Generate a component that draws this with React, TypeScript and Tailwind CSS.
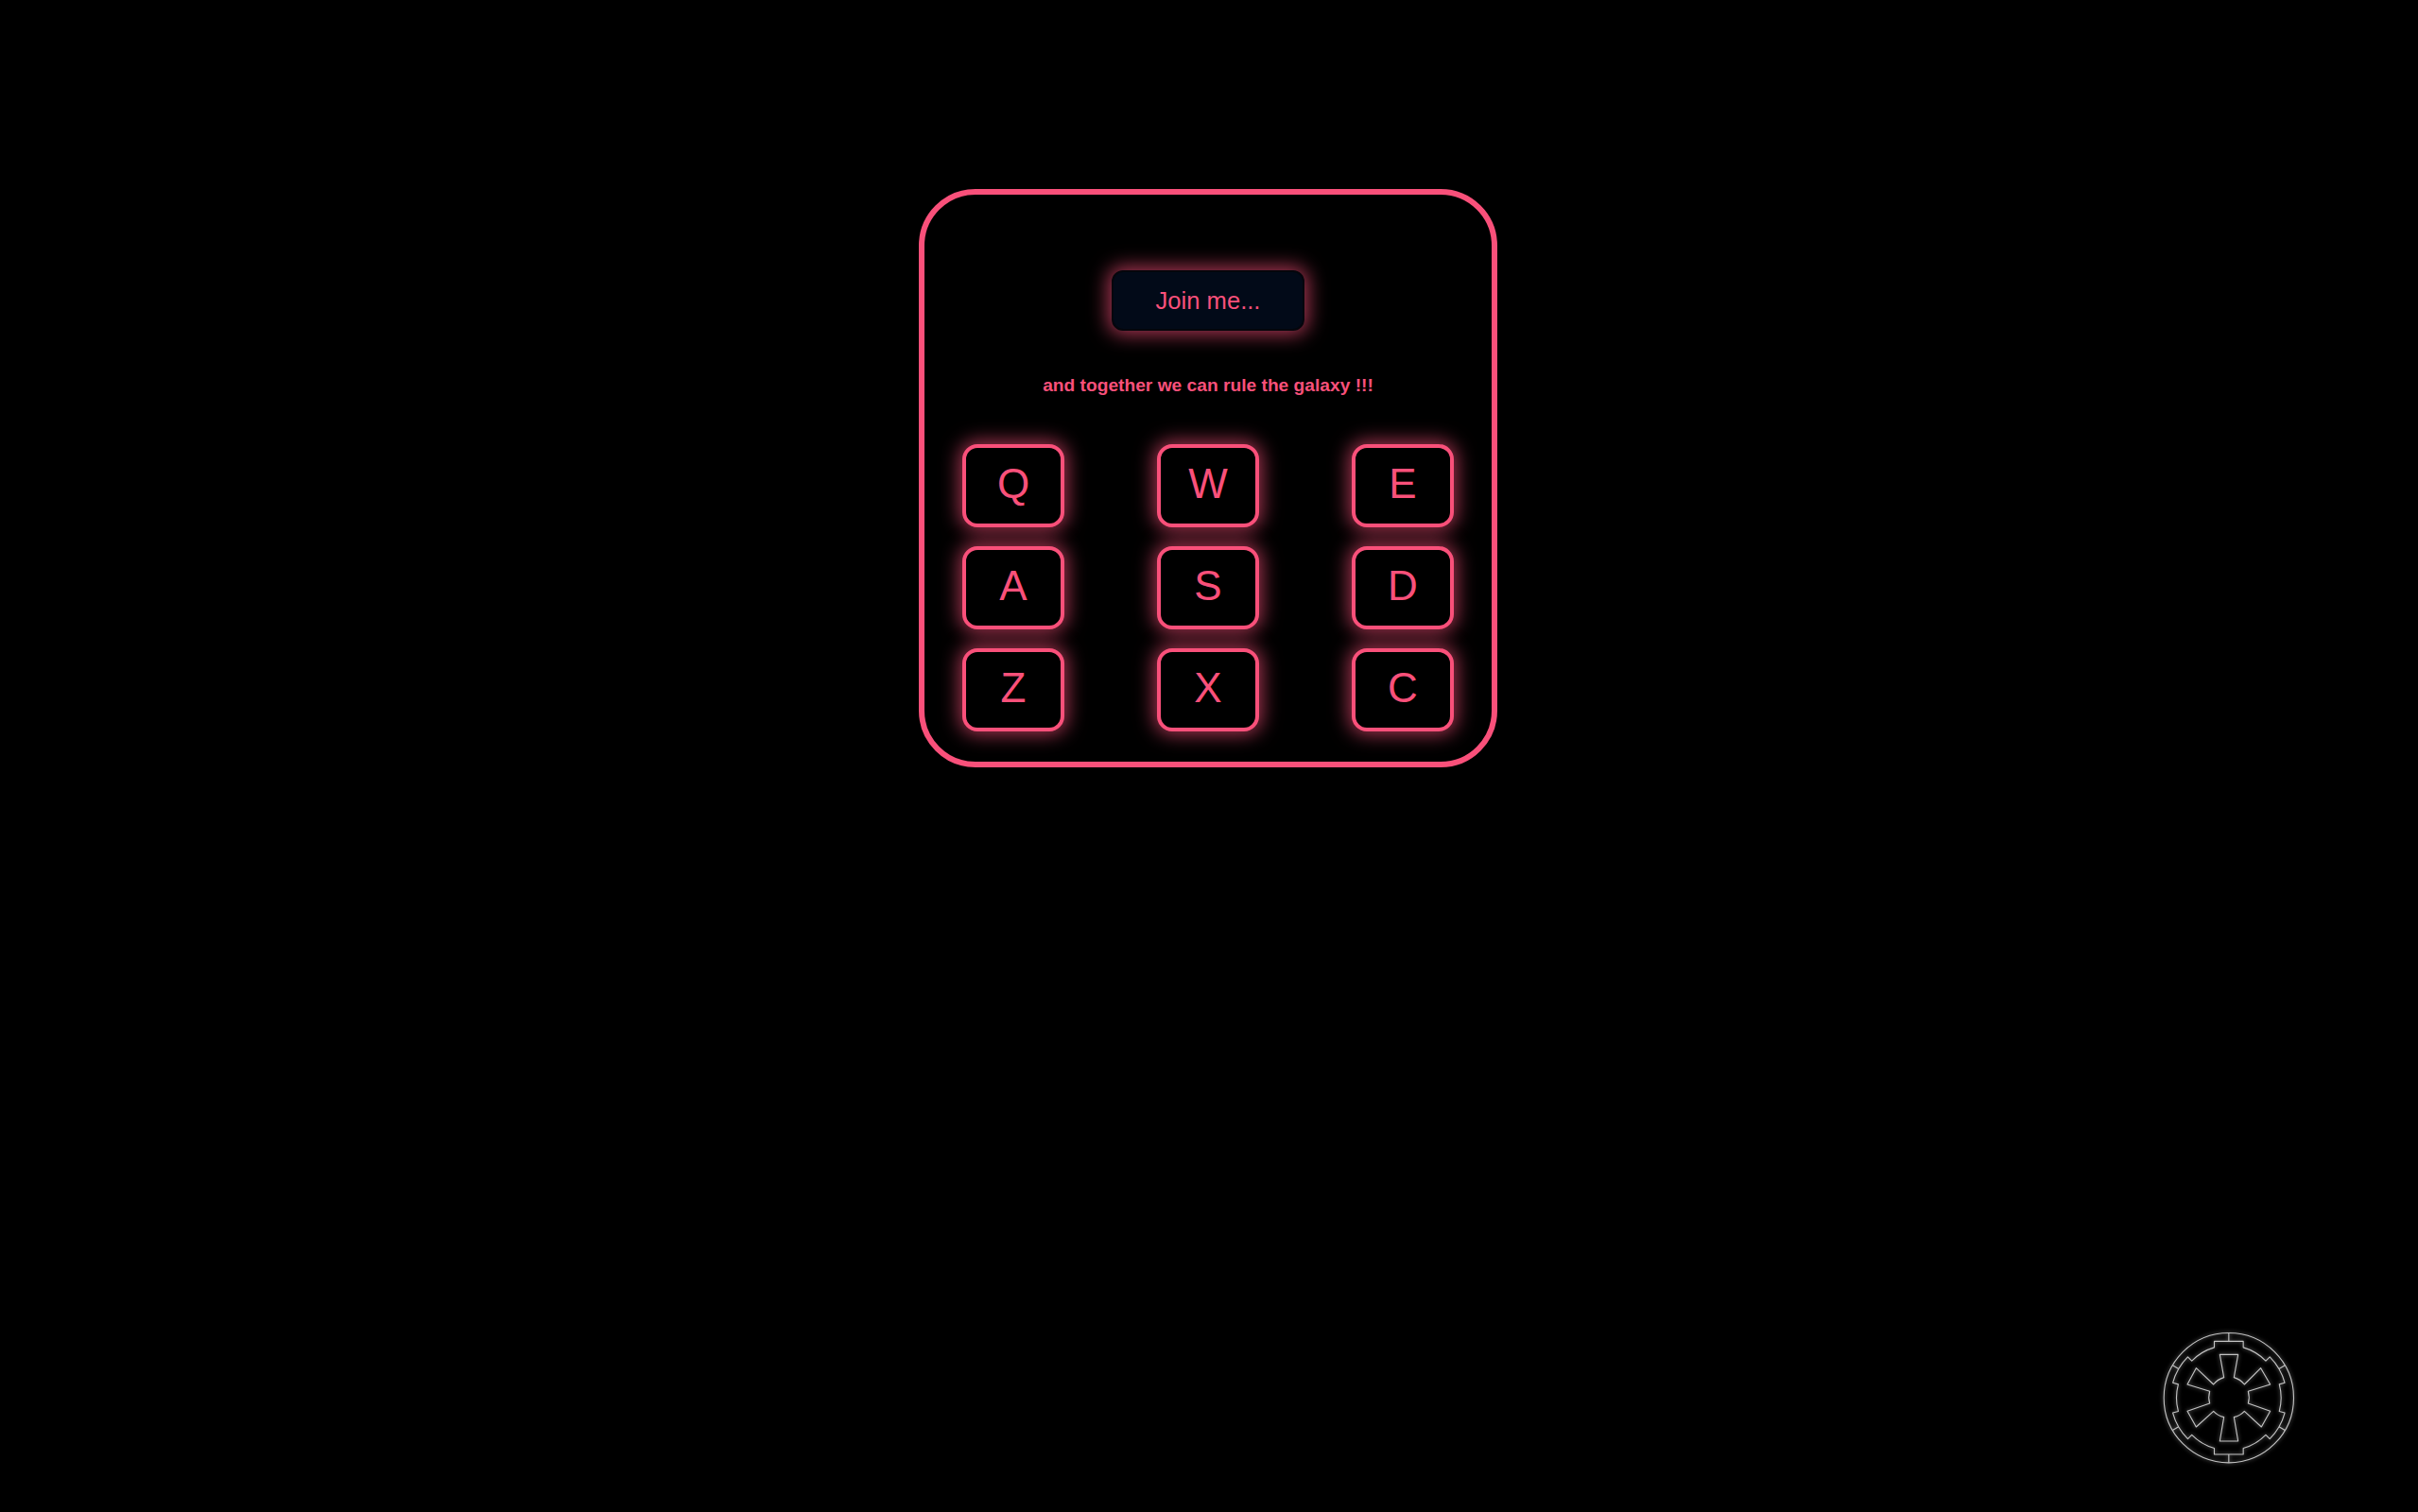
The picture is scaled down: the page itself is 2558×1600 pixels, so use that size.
const KEYS = ["Q", "W", "E", "A", "S", "D", "Z", "X", "C"];

const CX = 263.5;
const CY = 252.5;

function pt(deg: number, r: number) {
  const a = ((deg - 90) * Math.PI) / 180;
  return `${(CX + r * Math.cos(a)).toFixed(1)} ${(CY + r * Math.sin(a)).toFixed(1)}`;
}

function ringPath() {
  const rIn = 166;
  const rOut = 184;
  let d = "M 217.5 92.5 L 217.5 73 L 309.5 73 L 309.5 92.5 ";
  d += `A ${rIn} ${rIn} 0 0 1 ${pt(45, rIn)} `;
  d += `L ${pt(45, rOut)} A ${rOut} ${rOut} 0 0 1 ${pt(75, rOut)} L ${pt(75, rIn)} A ${rIn} ${rIn} 0 0 1 ${pt(105, rIn)} `;
  d += `L ${pt(105, rOut)} A ${rOut} ${rOut} 0 0 1 ${pt(135, rOut)} L ${pt(135, rIn)} `;
  d += `A ${rIn} ${rIn} 0 0 1 309.5 412.5 L 309.5 432 L 217.5 432 L 217.5 412.5 `;
  d += `A ${rIn} ${rIn} 0 0 1 ${pt(225, rIn)} `;
  d += `L ${pt(225, rOut)} A ${rOut} ${rOut} 0 0 1 ${pt(255, rOut)} L ${pt(255, rIn)} A ${rIn} ${rIn} 0 0 1 ${pt(285, rIn)} `;
  d += `L ${pt(285, rOut)} A ${rOut} ${rOut} 0 0 1 ${pt(315, rOut)} L ${pt(315, rIn)} `;
  d += `A ${rIn} ${rIn} 0 0 1 217.5 92.5 Z`;
  return d;
}

function Emblem() {
  const connectors = [0, 60, 120, 180, 240, 300];
  return (
    <svg
      viewBox="0 0 510 510"
      className="absolute right-[118px] bottom-[35px] h-[170px] w-[170px] [filter:drop-shadow(0_0_2px_rgba(255,255,255,0.55))]"
      fill="none"
      stroke="#c4c4c4"
      strokeWidth={3.4}
      strokeLinejoin="round"
    >
      <circle cx={CX} cy={CY} r={206} />
      <path d={ringPath()} />
      {connectors.map((c) => {
        const flat = c % 180 === 0;
        return <path key={c} d={`M ${pt(c, flat ? 179.5 : 184)} L ${pt(c, 206)}`} />;
      })}
      <path d="M235 115 L293 115 L280 188 A66 66 0 0 1 313 210 L365 158 L395 210 L325 232 A66 66 0 0 1 325 270 L395 295 L367 345 L313 295 A66 66 0 0 1 280 314 L293 390 L235 390 L248 314 A66 66 0 0 1 215 295 L160 345 L132 295 L203 270 A66 66 0 0 1 203 232 L132 210 L160 158 L215 210 A66 66 0 0 1 248 188 Z" />
    </svg>
  );
}

export default function App() {
  return (
    <div className="relative flex min-h-screen flex-col items-center bg-black pt-[200px] pr-[2px] font-['Liberation_Sans',Arial,sans-serif] text-[#f9507a]">
      <div className="box-border flex h-[612px] w-[612px] flex-col items-center rounded-[60px] border-[6px] border-[#f9507a] px-[40px] pt-[80px]">
        <button className="h-[64px] w-[204px] rounded-[12px] border-2 border-[#05060c] bg-[#020a18] pt-[1px] text-[25.6px] text-[#f9507a] shadow-[0_0_20px_4px_#f9507aaa]">
          Join me...
        </button>
        <p className="mt-[45px] h-[26px] text-[19.2px] leading-[26px] font-bold">and together we can rule the galaxy !!!</p>
        <div className="mt-[49px] grid w-full grid-cols-[108px_108px_108px] justify-between gap-y-[20px]">
          {KEYS.map((k) => (
            <button
              key={k}
              className="flex h-[88px] w-[108px] items-center justify-center rounded-[16px] border-4 border-[#f9507a] bg-black pb-[5px] text-[44px] text-[#f9507a] shadow-[0_0_20px_3px_#f9507aaa]"
            >
              {k}
            </button>
          ))}
        </div>
      </div>
      <Emblem />
    </div>
  );
}
